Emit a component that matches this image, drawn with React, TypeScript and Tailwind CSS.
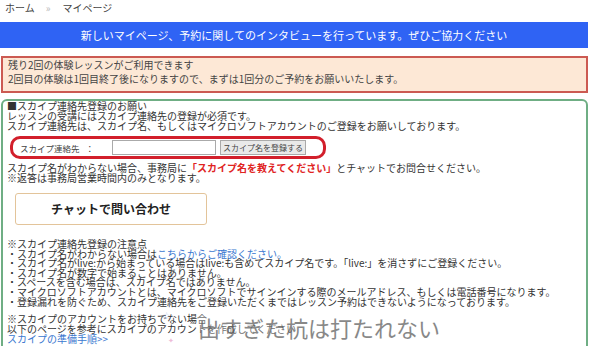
import React from "react";

const jp = { fontFamily: '"Noto Sans CJK JP", "Noto Sans", sans-serif' };

export default function App() {
  return (
    <div className="relative w-[600px] h-[346px] overflow-hidden bg-white text-[#333]" style={jp}>
      <div className="w-[588px]">
        {/* breadcrumb */}
        <div className="h-[22px] pl-[5px] pt-[2px] text-[10px] leading-[12px] text-[#444] flex items-start">
          <span>ホーム</span>
          <span className="ml-[11px] mr-[12px] text-[#bbb]">»</span>
          <span>マイページ</span>
        </div>
        {/* blue bar */}
        <div className="h-[26px] bg-[#2f63f4] flex items-center justify-center text-white text-[11px] leading-[12px]">
          新しいマイページ、予約に関してのインタビューを行っています。ぜひご協力ください
        </div>
        {/* red notice */}
        <div className="mt-[8px] ml-[1px] h-[37px] border-2 border-[#cc5a52] bg-[#fde8d6] pl-[5px] text-[10px] leading-[14px] text-[#444]">
          <div>残り2回の体験レッスンがご利用できます</div>
          <div>2回目の体験は1回目終了後になりますので、まずは1回分のご予約をお願いいたします。</div>
        </div>
        {/* green box */}
        <div className="mt-[6px] ml-[1px] h-[300px] border-2 border-[#6fae84] rounded-[6px] pl-[4px] text-[10px] leading-[10px] text-[#333]">
          <div>■スカイプ連絡先登録のお願い</div>
          <div>レッスンの受講にはスカイプ連絡先の登録が必須です。</div>
          <div>スカイプ連絡先は、スカイプ名、もしくはマイクロソフトアカウントのご登録をお願いしております。</div>
          <div className="mt-[5px] ml-[3px] w-[316px] h-[23px] border-[3px] border-[#d21f2b] rounded-[10px] flex items-center pl-[7px]">
            <span className="text-[8.5px] text-[#444]">スカイプ連絡先</span>
            <span className="ml-[6px] text-[8.5px] text-[#444]">：</span>
            <div className="ml-[18px] w-[104px] h-[15px] border border-[#aaa] bg-white" />
            <div className="ml-[4px] w-[86px] h-[15px] border border-[#aaa] bg-[#e9e9e9] flex items-center justify-center text-[8px] leading-[8px] text-[#444]">
              スカイプ名を登録する
            </div>
          </div>
          <div className="mt-[4px]">
            スカイプ名がわからない場合、事務局に
            <span className="font-bold text-[#e0241f]">「スカイプ名を教えてください」</span>
            とチャットでお問合せください。
          </div>
          <div>※返答は事務局営業時間内のみとなります。</div>
          <div className="mt-[10px] ml-[8px] w-[192px] h-[32px] border border-[#e3c49a] rounded-[3px] flex items-center justify-center text-[12px] font-bold text-[#222]">
            チャットで問い合わせ
          </div>
          <div className="mt-[14px] leading-[9.6px]">
            <div>※スカイプ連絡先登録の注意点</div>
            <div>・スカイプ名がわからない場合は<span className="text-[#3b78d0]">こちらからご確認ください。</span></div>
            <div>・スカイプ名がlive:から始まっている場合はlive:も含めてスカイプ名です。「live:」を消さずにご登録ください。</div>
            <div>・スカイプ名が数字で始まることはありません。</div>
            <div>・スペースを含む場合は、スカイプ名ではありません。</div>
            <div>・マイクロソフトアカウントとは、マイクロソフトでサインインする際のメールアドレス、もしくは電話番号になります。</div>
            <div>・登録漏れを防ぐため、スカイプ連絡先をご登録いただくまではレッスン予約はできないようになっております。</div>
          </div>
          <div className="mt-[8px] leading-[10px]">
            <div>※スカイプのアカウントをお持ちでない場合</div>
            <div>以下のページを参考にスカイプのアカウントを作成してください</div>
            <div className="text-[#3b78d0]">スカイプの準備手順&gt;&gt;</div>
          </div>
        </div>
      </div>
      {/* watermark */}
      <div className="absolute left-[198px] top-[313px] text-[22px] leading-[28px] text-[#6b6b6b] opacity-80 bg-white/40">
        出すぎた杭は打たれない
      </div>
      <div className="absolute left-[163px] top-[310px] text-[7px] text-[#9fb7e8] opacity-70">☆</div>
      <div className="absolute left-[168px] top-[335px] text-[7px] text-[#e8a0c8] opacity-70">✦</div>
    </div>
  );
}
